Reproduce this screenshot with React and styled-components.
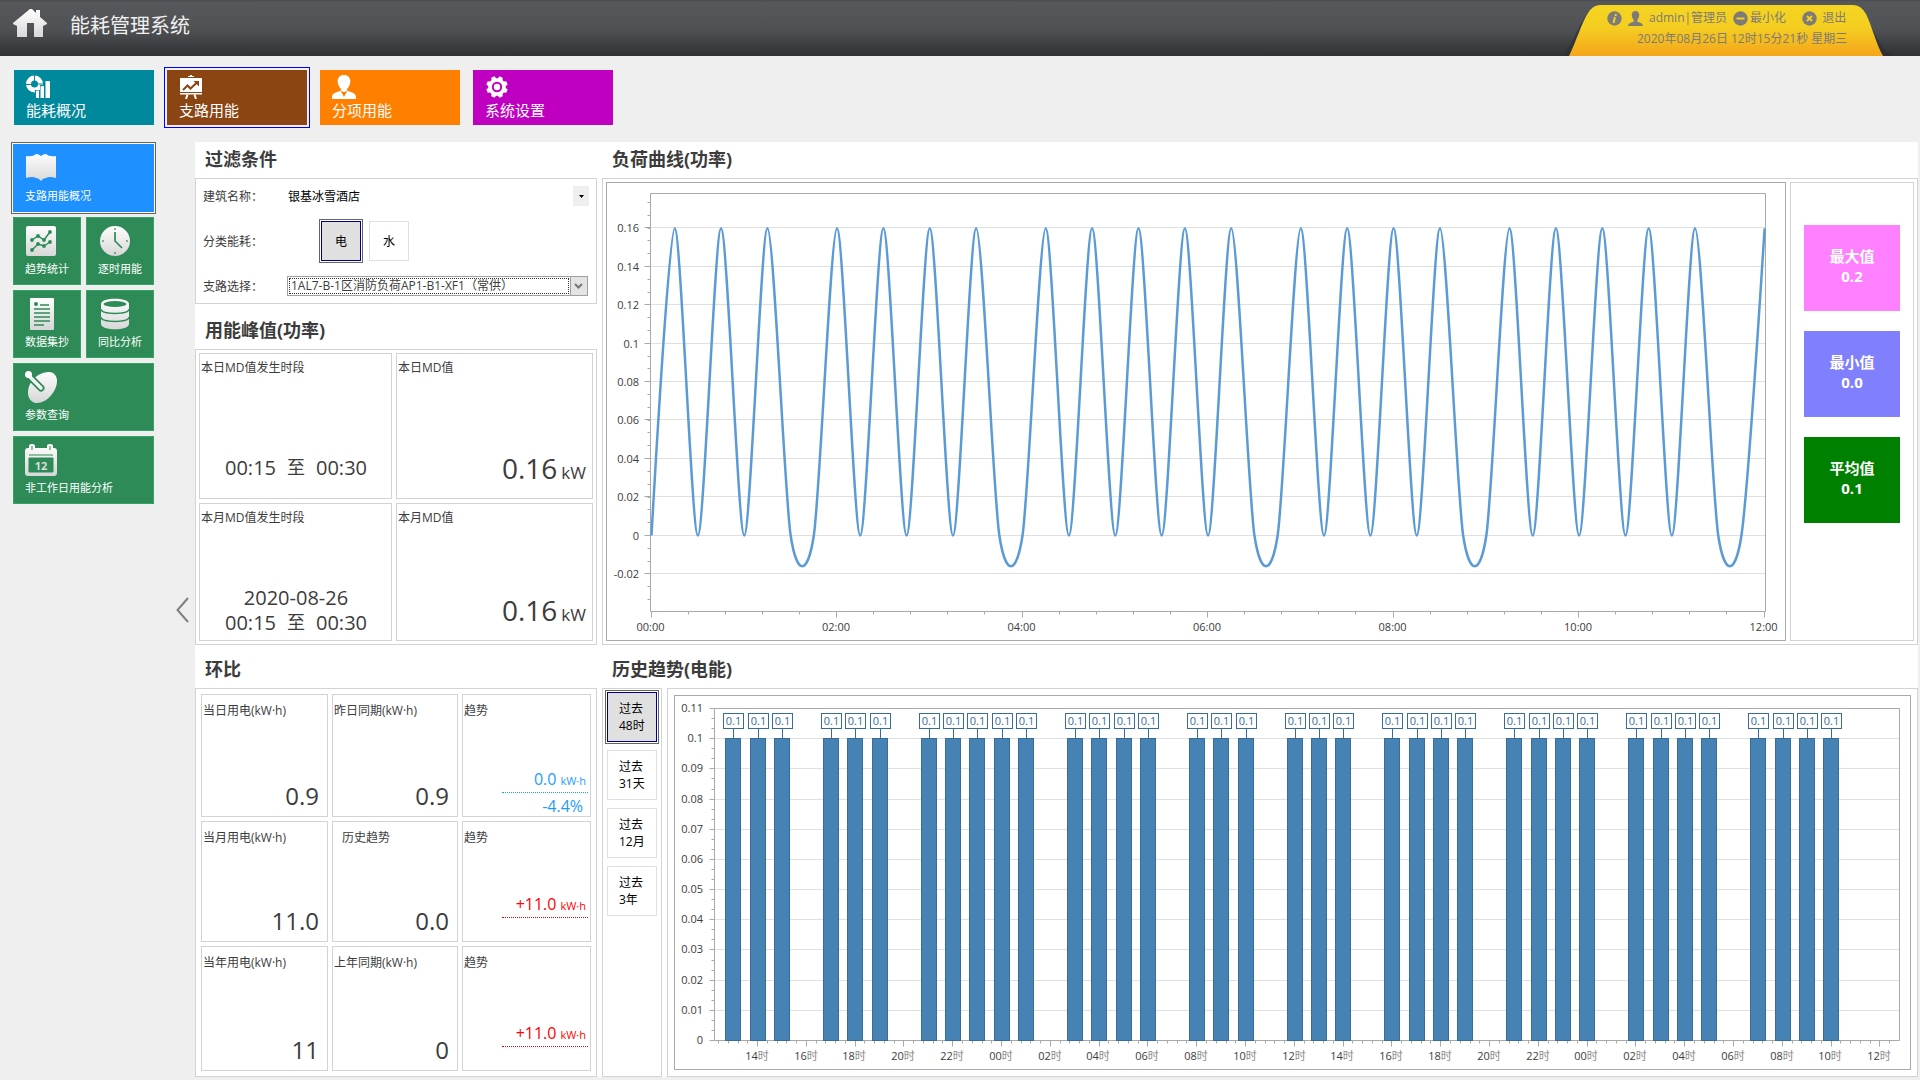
import { Fragment, useState } from "react";
import styled, { createGlobalStyle, css } from "styled-components";

const GlobalStyle = createGlobalStyle`
  *, *::before, *::after {
    box-sizing: border-box;
  }
  body {
    margin: 0;
    background: #efefef;
    color: #3c3c3c;
    font-family: "Open Sans", "Noto Sans CJK SC", sans-serif;
    font-size: 12px;
    line-height: 16px;
  }
  button, select {
    font: inherit;
    color: inherit;
    margin: 0;
    padding: 0;
    border: 0;
    border-radius: 0;
    background: none;
    text-align: left;
  }
  button {
    cursor: pointer;
  }
  h1, h2, p, dl, dt, dd {
    margin: 0;
    font-weight: 400;
  }
  svg {
    display: block;
    flex: none;
  }
`;

/* ---------- header ---------- */

const Header = styled.header`
  display: flex;
  height: 56px;
  padding-left: 13px;
  background: linear-gradient(#4a4b4e 0, #56575b 2px, #515256 50%, #3c3f41 80%, #303336 100%);
`;
const HomeLink = styled.a`
  padding-top: 8px;
`;
const AppTitle = styled.h1`
  flex: 1;
  padding: 13px 0 0 23px;
  color: #f0f0f0;
  font-size: 20px;
  line-height: 26px;
`;
const UserTab = styled.div`
  position: relative;
  width: 330px;
  margin-right: 25px;
  padding: 8px 0 0 42px;
  color: #7d7b78;

  > svg {
    position: absolute;
    left: 0;
    top: 0;
  }
`;
const UserLine = styled.div`
  position: relative;
  display: flex;
  align-items: center;
  gap: 6px;
  height: 20px;
`;
const HeaderButton = styled.button`
  display: flex;
  align-items: center;
  gap: ${(p) => p.$gap}px;
  margin-right: 10px;
`;
const Clock = styled.time`
  position: relative;
  display: block;
  padding-left: 30px;
  line-height: 22px;
`;

/* ---------- top navigation ---------- */

const TopNav = styled.nav`
  display: flex;
  gap: 13px;
  padding: 14px 14px 17px;
`;
const NavTile = styled.button`
  width: 140px;
  height: 55px;
  padding: 5px 12px 4px;
  background: ${(p) => p.$color};
  color: #fff;
  font-size: 15px;
  line-height: 22px;
  ${(p) =>
    p.$active &&
    css`
      box-shadow: 0 0 0 2px #efefef, 0 0 0 3px #0000ff;
    `}
`;

/* ---------- side menu ---------- */

const Body = styled.div`
  display: flex;
  padding: 0 2px 3px 13px;
`;
const SideMenu = styled.nav`
  display: grid;
  grid-template-columns: 68px 68px;
  grid-auto-rows: 68px;
  gap: 5px;
  padding-top: 2px;
`;
const SideTile = styled.button`
  grid-column: span ${(p) => (p.$wide ? 2 : 1)};
  padding: 7px 11px;
  border: 1px solid ${(p) => (p.$active ? "#1e90ff" : "#32a565")};
  background: ${(p) => (p.$active ? "#1e90ff" : "#2e8b57")};
  color: #fff;
  font-size: 11px;
  white-space: nowrap;
  ${(p) =>
    p.$active &&
    css`
      box-shadow: 0 0 0 1px #fff, 0 0 0 2px #646464;
    `}

  svg {
    margin-bottom: 4px;
  }
`;
const CollapseButton = styled.button`
  width: 41px;
  padding-left: 22px;
`;

/* ---------- content ---------- */

const Main = styled.main`
  flex: 1;
  min-width: 0;
  display: grid;
  grid-template-columns: 402px minmax(0, 1fr);
  gap: 7px 5px;
  background: #fff;
`;
const Column = styled.section`
  display: flex;
  flex-direction: column;
`;
const Title = styled.h2`
  height: 36px;
  padding-left: 10px;
  font-size: 18px;
  font-weight: 700;
  line-height: 34px;

  form + & {
    margin-top: 9px;
  }
`;
const panel = css`
  border: 1px solid #d3d3d3;
  background: #fff;
`;

const FilterForm = styled.form`
  ${panel}
  display: flex;
  flex-direction: column;
  gap: 13px;
  padding: 7px;
`;
const FilterRow = styled.div`
  display: flex;
  align-items: center;
`;
const FilterLabel = styled.label`
  width: 84px;
  padding-top: 2px;
`;
const PlainSelect = styled.div`
  position: relative;
  flex: 1;

  select {
    width: 100%;
    height: 20px;
    padding: 2px 0 0 1px;
    appearance: none;
    color: #000;
  }
  svg {
    position: absolute;
    right: 0;
    top: 0;
    pointer-events: none;
  }
`;
const BoxedSelect = styled(PlainSelect)`
  height: 20px;
  margin-right: 1px;
  padding: 1px 18px 1px 1px;
  border: 1px solid #a0a0a0;

  select {
    height: 16px;
    padding: 0 0 0 1px;
    border: 1px dotted #333;
    color: #3c3c3c;
    line-height: 14px;
  }
`;
const ToggleGroup = styled.div`
  display: flex;
  align-items: center;
  gap: 8px;
  height: 44px;
  padding-left: 34px;
`;
const Toggle = styled.button`
  width: ${(p) => p.$size}px;
  height: ${(p) => p.$size}px;
  padding-left: ${(p) => p.$inset}px;
  border: 1px solid #e0e0e0;
  color: #000;
  line-height: 17px;
  white-space: pre-line;
  ${(p) =>
    p.$active &&
    css`
      border-color: #00008b;
      background: #e0e0e0;
      box-shadow: 0 0 0 1px #fff, 0 0 0 2px #646464;
    `}
`;

const PeakGrid = styled.div`
  ${panel}
  flex: 1;
  display: grid;
  grid-template-columns: 193fr 197fr;
  grid-template-rows: 145fr 138fr;
  gap: 4px;
  padding: 3px;
`;
const CompareGrid = styled.div`
  ${panel}
  flex: 1;
  display: grid;
  grid-template-columns: 127fr 126fr 129fr;
  grid-template-rows: 123fr 121fr 125fr;
  gap: 4px;
  padding: 5px;
`;
const Cell = styled.dl`
  border: 1px solid #d3d3d3;
  display: flex;
  flex-direction: column;
  justify-content: space-between;
  padding: ${(p) => p.$top}px 0 0 1px;
`;
const CellLabel = styled.dt`
  padding-left: ${(p) => (p.$indent ? 8 : 0)}px;
`;
const Period = styled.dd`
  display: flex;
  flex-direction: column;
  align-items: center;
  justify-content: center;
  height: 50px;
  margin-bottom: 5px;
  font-size: 20px;
  line-height: 25px;
`;
const PeriodRange = styled.span`
  display: flex;
  gap: 11px;

  b {
    font-size: 18px;
    font-weight: 400;
  }
`;
const PeakValue = styled.dd`
  padding-right: 6px;
  font-size: 28px;
  line-height: 50px;
  text-align: right;

  small {
    margin-left: 4px;
    font-size: 17px;
  }
`;
const CompareValue = styled.dd`
  margin-bottom: 5px;
  padding-right: 8px;
  font-size: 24px;
  line-height: 30px;
  text-align: right;
`;
const Trend = styled.dd`
  width: 86px;
  margin: 0 2px 0 auto;
  color: ${(p) => p.$color};
  font-size: 16px;
  text-align: right;
`;
const TrendDelta = styled.p`
  padding-right: 2px;
  border-bottom: 1px dotted ${(p) => p.$color};
  line-height: 22px;

  small {
    margin-left: 4px;
    font-size: 11px;
  }
`;
const TrendPercent = styled.p`
  height: 23px;
  padding-right: 5px;
  line-height: 26px;
`;

const ChartPanel = styled.div`
  ${panel}
  flex: 1;
  min-width: 0;
  display: flex;
  gap: 4px;
  padding: ${(p) => p.$pad}px;
`;
const ChartFrame = styled.div`
  flex: 1;
  min-width: 0;
  border: 1px solid #a9a9a9;

  svg {
    width: 100%;
    height: auto;
    font-size: 11px;
  }
`;
const Stats = styled.div`
  width: 124px;
  border: 1px solid #d3d3d3;
  display: flex;
  flex-direction: column;
  align-items: center;
  gap: 20px;
  padding-top: 42px;
`;
const Stat = styled.p`
  width: 96px;
  height: 86px;
  padding-top: 21px;
  background: ${(p) => p.$color};
  color: #fff;
  font-size: 15px;
  font-weight: 700;
  line-height: 20px;
  text-align: center;

  span {
    display: block;
  }
`;
const HistoryRow = styled.div`
  flex: 1;
  display: flex;
  gap: 5px;
`;
const RangeList = styled.div`
  ${panel}
  width: 60px;
  display: flex;
  flex-direction: column;
  gap: 8px;
  padding: 3px 4px;
`;

/* ---------- icons ---------- */

const HomeIcon = () => (
  <svg width="34" height="30" viewBox="0 0 34 30">
    <defs>
      <linearGradient id="home" x1="0" y1="0" x2="0" y2="1">
        <stop offset="0" stopColor="#fff" />
        <stop offset="1" stopColor="#d8d8d8" />
      </linearGradient>
    </defs>
    <path fill="url(#home)" d="M17 1h2l4 4V2h4v7l7 6v1l-4 2v11h-9V15h-7v14H4V18l-4-2v-1z" />
  </svg>
);

const TabShape = () => (
  <svg width="330" height="56" viewBox="0 0 330 56">
    <defs>
      <linearGradient id="tab" x1="0" y1="0" x2="0" y2="1">
        <stop offset="0" stopColor="#f5d522" />
        <stop offset=".45" stopColor="#f4cd20" />
        <stop offset="1" stopColor="#f4a51c" />
      </linearGradient>
    </defs>
    <path fill="#2c2e31" opacity=".6" d="M-6 56C10 50 12 15 33 5H285C310 14 309 50 330 56z" />
    <path fill="url(#tab)" d="M4 56C11 42 17 22 23 13Q28 5 35 5H288Q296 5 301 14C307 26 311 44 318 56z" />
  </svg>
);

const RoundIcon = ({ children }) => (
  <svg width="15" height="15" viewBox="0 0 15 15" fill="none" stroke="#f4cf22" strokeWidth="2">
    <circle cx="7.5" cy="7.5" r="7.2" fill="#7d7b78" stroke="none" />
    {children}
  </svg>
);

const HeadIcon = () => (
  <svg width="15" height="15" viewBox="0 0 15 15" fill="#7d7b78">
    <path d="M7.5 0C10 0 11.500 1.800 11.200 4.500 11 6.800 10 8 9.300 9v1.500C11 11.600 15 12 15 15H0c0-3 4-3.400 5.700-4.500V9C5 8 4 6.800 3.800 4.500 3.500 1.800 5 0 7.500 0z" />
  </svg>
);

const navIcons = {
  overview: (
    <svg width="24" height="24" viewBox="0 0 24 24" fill="none">
      <circle cx="8.500" cy="9" r="6" stroke="#fff" strokeWidth="5" />
      <path d="M8.500 0v7M0 9.500h6M11 9h7" stroke="#00889c" strokeWidth="1" />
      <path d="M9 24v-9h5v-5h5V5h6v19z" fill="#00889c" />
      <path d="M10 16.500q0-1 1-1h2V23h-2q-1 0-1-1zM14.500 12q0-1 1-1h2.500V23h-3.500zM19.500 6h3.500q1 0 1 1v16h-4.500z" fill="#fff" />
    </svg>
  ),
  branch: (
    <svg width="24" height="24" viewBox="0 0 24 24" fill="none">
      <path d="M9 1h2V0h2v1h2v1H9zM1 3h21q1 0 1 1v13H1zM1 18h22v1.500H1z" fill="#fff" />
      <path d="M4 15l4.500-4.500 3 3L18.500 7" stroke="#8b4513" strokeWidth="2" />
      <path d="M14.500 6H20v5.500z" fill="#8b4513" />
      <path d="M8.500 19.500L7 24M15.500 19.500L17 24" stroke="#fff" strokeWidth="2" />
    </svg>
  ),
  category: (
    <svg width="24" height="24" viewBox="0 0 24 24" fill="#fff">
      <path d="M12 0c4 0 6.300 2.500 6.300 6.500 0 3-1.300 5-3.300 7.500v2l-3 1-3-1v-2C7 11.500 5.700 9.500 5.700 6.500 5.700 2.500 8 0 12 0z" />
      <path d="M8.500 15.500L12 22l3.500-6.500C18 17.500 24 17.500 24 22v2H0v-2c0-4.500 6-4.500 8.500-6.500z" />
    </svg>
  ),
  settings: (
    <svg width="24" height="24" viewBox="0 0 24 24" fill="none">
      <circle cx="12" cy="12" r="8.700" fill="#fff" />
      {[22.5, 67.5, 112.5, 157.5].map((a) => (
        <path key={a} d="M10.300 1.200h3.400l1.300 4v13.600l-1.300 4h-3.400l-1.300-4V5.200z" fill="#fff" transform={`rotate(${a} 12 12)`} />
      ))}
      <circle cx="12" cy="12" r="4.200" stroke="#c000c0" strokeWidth="2" />
    </svg>
  ),
};

const Metal = ({ id }) => (
  <defs>
    <linearGradient id={id} gradientUnits="userSpaceOnUse" x1="0" y1="0" x2="0" y2="32">
      <stop offset="0" stopColor="#fff" />
      <stop offset="1" stopColor="#d6d6d6" />
    </linearGradient>
  </defs>
);

const GREEN = "#2e8b57";
const sideIcons = {
  map: (
    <svg width="32" height="32" viewBox="0 0 32 32">
      <Metal id="m1" />
      <path fill="url(#m1)" d="M1 4q7 1 10-2 3 0 5 2 2-2 5-2 3 3 10 2v22q-7-2-10 0-3 0-5 3-2-3-5-3-3-2-10 0z" />
    </svg>
  ),
  trend: (
    <svg width="32" height="32" viewBox="0 0 32 32">
      <Metal id="m2" />
      <rect x="1" y="1" width="30" height="30" rx="2" fill="url(#m2)" />
      <g stroke={GREEN} strokeWidth="1.500" fill="none">
        <path d="M7 15l6-4 6 4 6-8M7 25l6-6 6 2 6-4" />
      </g>
      {[[7, 15], [13, 11], [19, 15], [25, 7], [7, 25], [13, 19], [19, 21], [25, 17]].map(([x, y]) => (
        <circle key={`${x}-${y}`} cx={x} cy={y} r="1.900" fill={GREEN} />
      ))}
    </svg>
  ),
  clock: (
    <svg width="32" height="32" viewBox="0 0 32 32">
      <Metal id="m3" />
      <circle cx="17" cy="16" r="15" fill="url(#m3)" />
      <path d="M17 7v9l7 7" stroke={GREEN} strokeWidth="1.700" fill="none" />
      <path d="M16 3h2v2h-2zM16 27h2v2h-2zM4 15h2v2H4zM28 15h2v2h-2z" fill={GREEN} opacity=".6" />
    </svg>
  ),
  doc: (
    <svg width="32" height="32" viewBox="0 0 32 32">
      <Metal id="m4" />
      <rect x="5" y="0" width="24" height="32" rx="1" fill="url(#m4)" />
      <circle cx="11" cy="6" r="2" fill={GREEN} />
      <path d="M15 7h9M9 11h16M9 15h16M9 19h16M9 23h16M9 27h10" stroke={GREEN} strokeWidth="1.500" />
    </svg>
  ),
  database: (
    <svg width="32" height="32" viewBox="0 0 32 32">
      <Metal id="m5" />
      <path fill="url(#m5)" d="M3 6c0-7 28-7 28 0v20c0 7-28 7-28 0z" />
      <ellipse cx="17" cy="6" rx="11.500" ry="3" fill={GREEN} />
      <path d="M3 11c0 6 28 6 28 0M3 19c0 6 28 6 28 0" stroke={GREEN} strokeWidth="1.300" fill="none" />
    </svg>
  ),
  dish: (
    <svg width="32" height="32" viewBox="0 0 32 32">
      <Metal id="m6" />
      <path fill="url(#m6)" d="M5 13C9 5 17 1 24 1c5 0 8 4 8 9 0 10-10 22-20 22-7 0-12-8-7-19z" />
      <path d="M3 4l13 13" stroke={GREEN} strokeWidth="7" strokeLinecap="round" />
      <path d="M3 4l13 13" stroke="#f4f4f4" strokeWidth="3.500" strokeLinecap="round" />
      <circle cx="3.500" cy="3.500" r="3.500" fill="#fff" />
    </svg>
  ),
  calendar: (
    <svg width="32" height="32" viewBox="0 0 32 32">
      <Metal id="m7" />
      <path
        fill="url(#m7)"
        d="M0 7q0-3 3-3h1V2q0-2 3-2t3 2v2h12V2q0-2 3-2t3 2v2h1q3 0 3 3v22q0 3-3 3H3q-3 0-3-3z"
      />
      <path d="M4 11h24M4 14h24v14H4zM7 2v4M25 2v4" fill={GREEN} stroke={GREEN} />
      <text x="16" y="26" fontSize="11" fontWeight="700" textAnchor="middle" fill="#dcdcdc">
        12
      </text>
    </svg>
  ),
};

const SmallArrow = () => (
  <svg width="16" height="20" viewBox="0 0 16 20">
    <path fill="#efefef" d="M0 0h16v20H0z" />
    <path fill="#000" d="M6 9h5l-2.500 3z" />
  </svg>
);
const ComboArrow = () => (
  <svg width="17" height="18" viewBox="0 0 17 18" fill="none">
    <path fill="#e4e4e4" d="M0 0h17v18H0z" />
    <path stroke="#a0a0a0" d="M.5 0v18" />
    <path stroke="#777" strokeWidth="2" d="M5 7l3.500 3.500L12 7" />
  </svg>
);

/* ---------- charts ---------- */

const INK = "#3c3c3c";
const AXIS = "#a9a9a9";
const GRID = "#e0e0e0";
const times = (n, fn) => Array.from({ length: n }, (_, i) => fn(i));

// quarter-hour readings from 00:00 to 12:00
const peaks = [1, 3, 5, 8, 10, 12, 14, 17, 19, 21, 23, 25, 28, 30, 32, 34, 37, 39, 41, 43, 45, 48];
const load = times(49, (i) => (peaks.includes(i) ? 0.16 : 0));

function LoadChart() {
  const left = 43.5;
  const right = 1158.5;
  const top = 10.5;
  const bottom = 428.5;
  const x = (i) => 44.5 + i * 23.19;
  const y = (v) => 352.5 - v * 1920;

  // cardinal spline, tension 0.8
  const k = 0.8 / 6;
  let d = `M${x(0)} ${y(load[0])}`;
  for (let i = 0; i < 48; i++) {
    const a = Math.max(i - 1, 0);
    const b = Math.min(i + 2, 48);
    const x1 = i === 0 ? x(0) : x(i) + k * (x(i + 1) - x(a));
    const y1 = i === 0 ? y(load[0]) : y(load[i]) + k * (y(load[i + 1]) - y(load[a]));
    const x2 = i === 47 ? x(48) : x(i + 1) - k * (x(b) - x(i));
    const y2 = i === 47 ? y(load[48]) : y(load[i + 1]) - k * (y(load[b]) - y(load[i]));
    d += `C${x1} ${y1} ${x2} ${y2} ${x(i + 1)} ${y(load[i + 1])}`;
  }

  return (
    <svg viewBox="0 0 1178 457" role="img" aria-label="负荷曲线(功率)">
      {times(10, (i) => {
        const v = (i - 1) * 0.02;
        const gy = Math.round(y(v)) - 0.5;
        return (
          <Fragment key={i}>
            <path d={`M${left} ${gy}H${right}`} stroke={GRID} />
            <path d={`M${left - 6} ${gy}H${left}`} stroke={AXIS} />
            <text x="32" y={gy + 4} textAnchor="end" fill={INK}>
              {String(Number(v.toFixed(2)))}
            </text>
          </Fragment>
        );
      })}
      {times(32, (i) => {
        const gy = Math.round(y(-0.02) + 26 - i * 12.8) - 0.5;
        return <path key={i} d={`M${left - 3} ${gy}H${left}`} stroke={AXIS} />;
      })}
      {times(31, (i) => {
        const gx = Math.round(x(0) + i * 37.1) - 0.5;
        return <path key={i} d={`M${gx} ${bottom}v${i % 5 ? 3 : 6}`} stroke={AXIS} />;
      })}
      {times(7, (i) => (
        <text key={i} x={x(i * 8) - 1} y="448" textAnchor="middle" fill={INK}>
          {`${String(i * 2).padStart(2, "0")}:00`}
        </text>
      ))}
      <path d={`M${left} ${top}H${right}V${bottom}H${left}z`} fill="none" stroke={AXIS} />
      <path d={d} fill="none" stroke="#5b9bd5" strokeWidth="2.500" />
    </svg>
  );
}

// hours (counted from 12:00 two days ago) with a reading
const hours = [
  1, 2, 3, 5, 6, 7, 9, 10, 11, 12, 13, 15, 16, 17, 18, 20, 21, 22, 24, 25, 26, 28, 29, 30, 31, 33, 34,
  35, 36, 38, 39, 40, 41, 43, 44, 45, 46,
];

function HistoryChart() {
  const left = 39.5;
  const right = 1224.5;
  const top = 12.5;
  const bottom = 344.5;
  const x = (h) => Math.round(34 + h * 24.4);
  const y = (v) => Math.round(344 - v * 3018) + 0.5;

  return (
    <svg viewBox="0 0 1235 373" role="img" aria-label="历史趋势(电能)">
      {times(12, (i) => (
        <Fragment key={i}>
          <path d={`M${left} ${y(i / 100)}H${right}`} stroke={GRID} />
          <path d={`M${left - 5} ${y(i / 100)}H${left}`} stroke={AXIS} />
          <text x="28" y={y(i / 100) + 3} textAnchor="end" fill={INK}>
            {i / 100}
          </text>
        </Fragment>
      ))}
      {times(34, (i) => (
        <path key={i} d={`M${left - 3} ${y(i / 300)}H${left}`} stroke={AXIS} />
      ))}
      {times(121, (i) => {
        const gx = Math.round(44 + i * 9.76) - 0.5;
        return <path key={i} d={`M${gx} ${bottom}v${i % 5 === 4 ? 6 : 3}`} stroke={AXIS} />;
      })}
      <path d={`M${left} ${top}H${right}V${bottom}H${left}z`} fill="none" stroke={AXIS} />
      {times(24, (i) => (
        <text key={i} x={x(i * 2 + 2) - 1} y="364" textAnchor="middle" fill={INK}>
          {String((i * 2 + 14) % 24).padStart(2, "0")}
          <tspan fill="#8a8a8a">时</tspan>
        </text>
      ))}
      {hours.map((h) => (
        <g key={h} stroke="#386c99">
          <rect x={x(h) - 7.5} y="42.5" width="15" height="302" fill="#4682b4" />
          <path d={`M${x(h) + 0.5} 33v10`} />
          <rect x={x(h) - 9.5} y="17.5" width="20" height="15" fill="#fff" />
          <text x={x(h) + 0.5} y="29" textAnchor="middle" fill="#386c99" stroke="none">
            0.1
          </text>
        </g>
      ))}
    </svg>
  );
}

/* ---------- page ---------- */

const nav = [
  ["overview", "能耗概况", "#00889c"],
  ["branch", "支路用能", "#8b4513"],
  ["category", "分项用能", "#ff8000"],
  ["settings", "系统设置", "#c000c0"],
];

const menu = [
  ["map", "支路用能概况", true],
  ["trend", "趋势统计", false],
  ["clock", "逐时用能", false],
  ["doc", "数据集抄", false],
  ["database", "同比分析", false],
  ["dish", "参数查询", true],
  ["calendar", "非工作日用能分析", true],
];

const UP = "#ff0000";
const DOWN = "#1e9bff";
const compare = [
  { label: "当日用电(kW·h)", value: "0.9", prev: "昨日同期(kW·h)", prevValue: "0.9", delta: "0.0", percent: "-4.4%", color: DOWN },
  { label: "当月用电(kW·h)", value: "11.0", prev: "历史趋势", indent: true, prevValue: "0.0", delta: "+11.0", color: UP },
  { label: "当年用电(kW·h)", value: "11", prev: "上年同期(kW·h)", prevValue: "0", delta: "+11.0", color: UP },
];

const stats = [
  ["最大值", "0.2", "#ff80ff"],
  ["最小值", "0.0", "#8080ff"],
  ["平均值", "0.1", "#008000"],
];

const ranges = ["过去\n48时", "过去\n31天", "过去\n12月", "过去\n3年"];

const Range = () => (
  <PeriodRange>
    00:15 <b>至</b> 00:30
  </PeriodRange>
);

export default function App() {
  const [page, setPage] = useState("branch");
  const [view, setView] = useState("map");
  const [energy, setEnergy] = useState("电");
  const [range, setRange] = useState(ranges[0]);

  return (
    <>
      <GlobalStyle />
      <Header>
        <HomeLink href="#" aria-label="首页">
          <HomeIcon />
        </HomeLink>
        <AppTitle>能耗管理系统</AppTitle>
        <UserTab>
          <TabShape />
          <UserLine>
            <RoundIcon>
              <path d="M9 3L8.500 5M8 6L6.500 12" />
            </RoundIcon>
            <HeadIcon />
            <span>admin|管理员</span>
            <HeaderButton $gap={2}>
              <RoundIcon>
                <path d="M3.500 7.500h8" />
              </RoundIcon>
              最小化
            </HeaderButton>
            <HeaderButton $gap={5}>
              <RoundIcon>
                <path d="M5 5l5 5M10 5l-5 5" />
              </RoundIcon>
              退出
            </HeaderButton>
          </UserLine>
          <Clock>2020年08月26日 12时15分21秒 星期三</Clock>
        </UserTab>
      </Header>

      <TopNav>
        {nav.map(([id, text, color]) => (
          <NavTile key={id} $color={color} $active={page === id} onClick={() => setPage(id)}>
            {navIcons[id]}
            {text}
          </NavTile>
        ))}
      </TopNav>

      <Body>
        <SideMenu>
          {menu.map(([id, text, wide]) => (
            <SideTile key={id} $wide={wide} $active={view === id} onClick={() => setView(id)}>
              {sideIcons[id]}
              {text}
            </SideTile>
          ))}
        </SideMenu>
        <CollapseButton aria-label="收起">
          <svg width="13" height="26" viewBox="0 0 13 26" fill="none" stroke="#808080" strokeWidth="2">
            <path d="M12 1L1.500 13 12 25" />
          </svg>
        </CollapseButton>

        <Main>
          <Column>
            <Title>过滤条件</Title>
            <FilterForm>
              <FilterRow>
                <FilterLabel htmlFor="building">建筑名称：</FilterLabel>
                <PlainSelect>
                  <select id="building">
                    <option>银基冰雪酒店</option>
                  </select>
                  <SmallArrow />
                </PlainSelect>
              </FilterRow>
              <FilterRow>
                <FilterLabel as="span" id="energy">
                  分类能耗：
                </FilterLabel>
                <ToggleGroup role="group" aria-labelledby="energy">
                  {["电", "水"].map((e) => (
                    <Toggle
                      key={e}
                      type="button"
                      $size={40}
                      $inset={13}
                      $active={energy === e}
                      onClick={() => setEnergy(e)}
                    >
                      {e}
                    </Toggle>
                  ))}
                </ToggleGroup>
              </FilterRow>
              <FilterRow>
                <FilterLabel htmlFor="branch">支路选择：</FilterLabel>
                <BoxedSelect>
                  <select id="branch">
                    <option>1AL7-B-1区消防负荷AP1-B1-XF1（常供）</option>
                  </select>
                  <ComboArrow />
                </BoxedSelect>
              </FilterRow>
            </FilterForm>

            <Title>用能峰值(功率)</Title>
            <PeakGrid>
              <Cell $top={6}>
                <CellLabel>本日MD值发生时段</CellLabel>
                <Period>
                  <Range />
                </Period>
              </Cell>
              <Cell $top={6}>
                <CellLabel>本日MD值</CellLabel>
                <PeakValue>
                  0.16<small>kW</small>
                </PeakValue>
              </Cell>
              <Cell $top={6}>
                <CellLabel>本月MD值发生时段</CellLabel>
                <Period>
                  <span>2020-08-26</span>
                  <Range />
                </Period>
              </Cell>
              <Cell $top={6}>
                <CellLabel>本月MD值</CellLabel>
                <PeakValue>
                  0.16<small>kW</small>
                </PeakValue>
              </Cell>
            </PeakGrid>
          </Column>

          <Column>
            <Title>负荷曲线(功率)</Title>
            <ChartPanel $pad={3}>
              <ChartFrame>
                <LoadChart />
              </ChartFrame>
              <Stats>
                {stats.map(([name, value, color]) => (
                  <Stat key={name} $color={color}>
                    <span>{name}</span>
                    <span>{value}</span>
                  </Stat>
                ))}
              </Stats>
            </ChartPanel>
          </Column>

          <Column>
            <Title>环比</Title>
            <CompareGrid>
              {compare.map((row) => (
                <Fragment key={row.label}>
                  <Cell $top={8}>
                    <CellLabel>{row.label}</CellLabel>
                    <CompareValue>{row.value}</CompareValue>
                  </Cell>
                  <Cell $top={8}>
                    <CellLabel $indent={row.indent}>{row.prev}</CellLabel>
                    <CompareValue>{row.prevValue}</CompareValue>
                  </Cell>
                  <Cell $top={8}>
                    <CellLabel>趋势</CellLabel>
                    <Trend $color={row.color}>
                      <TrendDelta $color={row.color}>
                        {row.delta}
                        <small>kW·h</small>
                      </TrendDelta>
                      <TrendPercent>{row.percent}</TrendPercent>
                    </Trend>
                  </Cell>
                </Fragment>
              ))}
            </CompareGrid>
          </Column>

          <Column>
            <Title>历史趋势(电能)</Title>
            <HistoryRow>
              <RangeList>
                {ranges.map((r) => (
                  <Toggle key={r} $size={50} $inset={11} $active={range === r} onClick={() => setRange(r)}>
                    {r}
                  </Toggle>
                ))}
              </RangeList>
              <ChartPanel $pad={6}>
                <ChartFrame>
                  <HistoryChart />
                </ChartFrame>
              </ChartPanel>
            </HistoryRow>
          </Column>
        </Main>
      </Body>
    </>
  );
}
